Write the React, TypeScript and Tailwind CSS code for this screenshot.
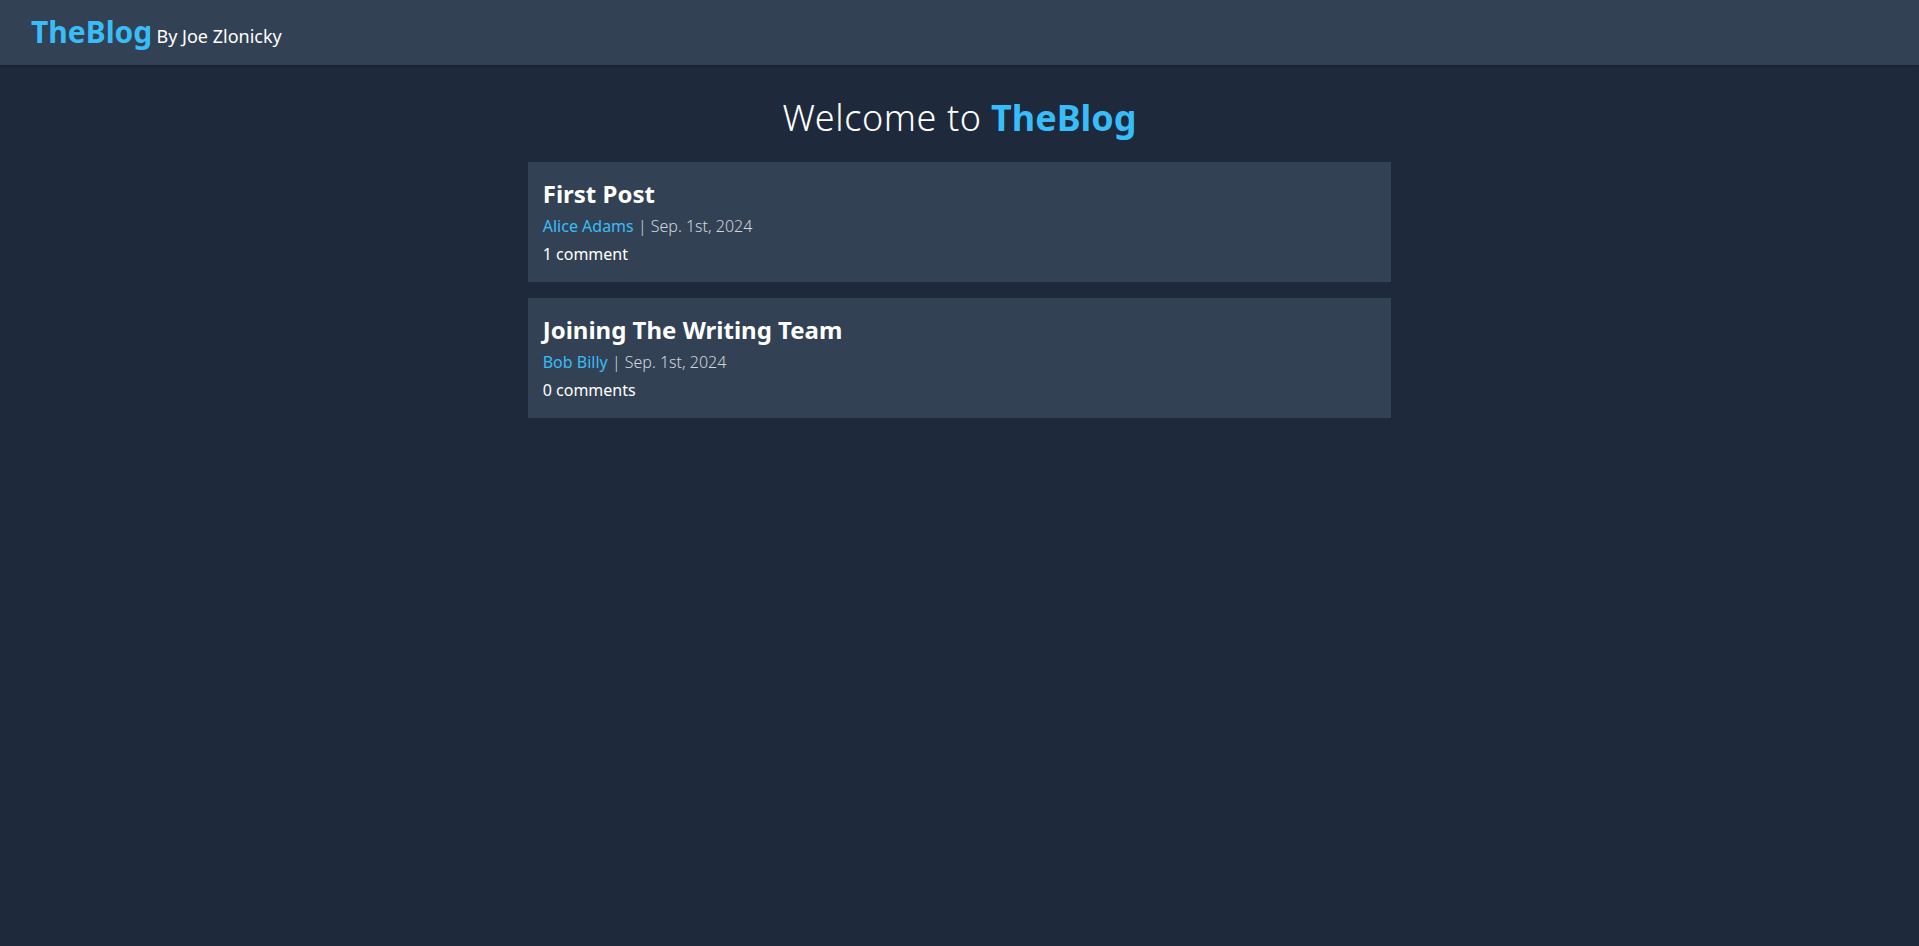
const posts = [
  { title: "First Post", author: "Alice Adams", date: "Sep. 1st, 2024", comments: "1 comment" },
  { title: "Joining The Writing Team", author: "Bob Billy", date: "Sep. 1st, 2024", comments: "0 comments" },
];

export default function App() {
  return (
    <div className="min-h-screen bg-[#1e293b] text-white font-['Noto_Sans',sans-serif]">
      <header className="h-[65px] flex items-center bg-[#334155] shadow-[0_1px_2px_rgba(0,0,0,0.25)] px-[31px] pb-[2px]">
        <div>
          <span className="text-3xl font-bold text-[#38bdf8]">TheBlog</span>{" "}
          <span className="text-lg">By Joe Zlonicky</span>
        </div>
      </header>

      <main className="pt-[33px]">
        <h1 className="text-4xl font-light text-center mb-[24px]">
          <span className="tracking-[0.6px]">Welcome to</span>{" "}
          <span className="font-bold text-[#38bdf8]">TheBlog</span>
        </h1>

        <div className="w-[45%] mx-auto flex flex-col gap-4">
          {posts.map((post) => (
            <div key={post.title} className="bg-[#334155] py-4 pl-[15px] pr-4">
              <h2 className="text-2xl font-bold">{post.title}</h2>
              <div className="mt-1">
                <span className="text-[#38bdf8]">{post.author}</span>
                <span className="font-light text-gray-300"> | {post.date}</span>
              </div>
              <div className="mt-1">{post.comments}</div>
            </div>
          ))}
        </div>
      </main>
    </div>
  );
}
